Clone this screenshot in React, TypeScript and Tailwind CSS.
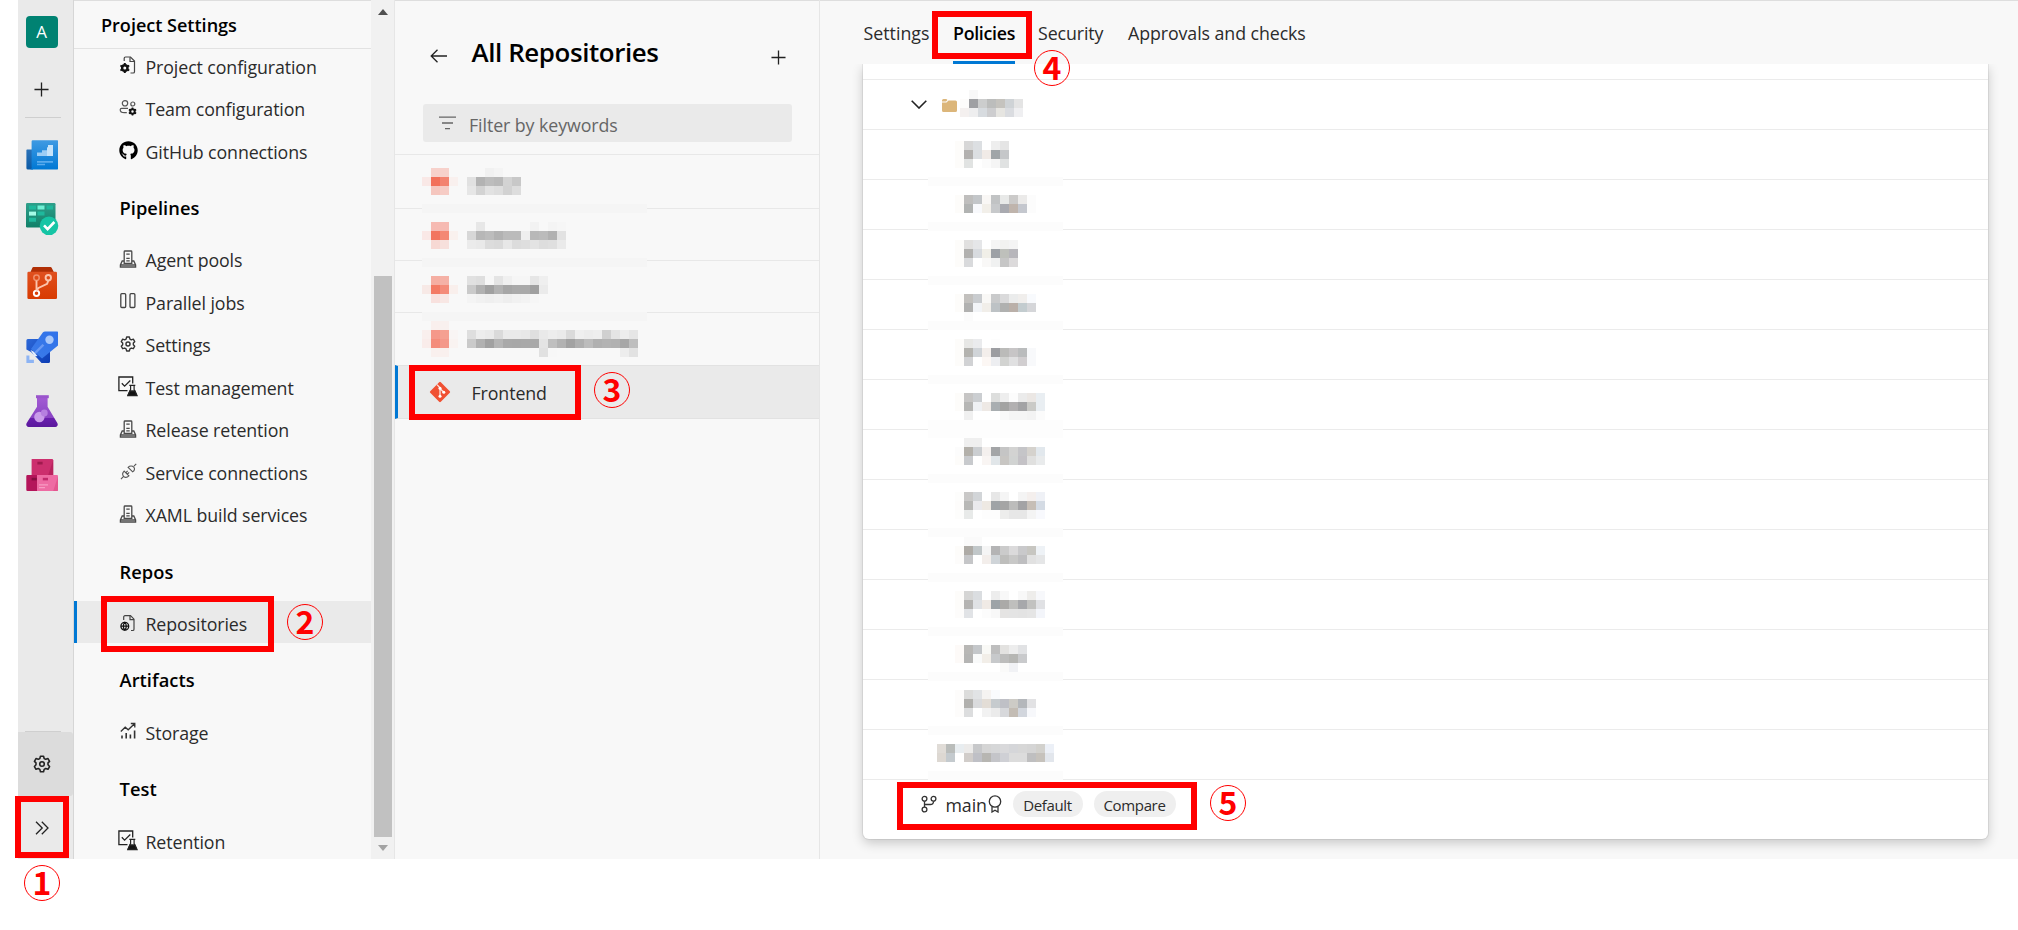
import React from "react";
import { FaGithub } from "react-icons/fa";

type IconProps = { className?: string };

/* ---------- Rail icons ---------- */

const OverviewIcon = () => (
  <svg viewBox="0 0 32 32" className="size-8">
    <defs>
      <linearGradient id="ov" x1="0" y1="0" x2="0" y2="1">
        <stop offset="0" stopColor="#3f9ae3" />
        <stop offset="1" stopColor="#0078d4" />
      </linearGradient>
      <linearGradient id="ovl" x1="0" y1="0" x2="0" y2="1">
        <stop offset="0" stopColor="#2a72b8" />
        <stop offset="1" stopColor="#0b5aa5" />
      </linearGradient>
    </defs>
    <path d="M1 10.5h6v20H2a1.6 1.6 0 0 1-1.6-1.6V11z" fill="url(#ovl)" />
    <path d="M5.6 2.6A1.3 1.3 0 0 1 7 1.200h24a1.2 1.2 0 0 1 1.200 1.200V29a1.500 1.500 0 0 1-1.500 1.500H4.200A2 2 0 0 0 5.600 28z" fill="url(#ov)" />
    <path d="M11 17v-3.400h5v-2.400h5V8.600h1V17z" fill="#9ccdf5" />
    <path d="M21 17V8.600h1V6h5v11z" fill="#c6e3fa" />
    <path d="M11 22h16v1.700H11zM11 24.800h8v1.500h-8z" fill="#5aabed" />
  </svg>
);

const BoardsIcon = () => (
  <svg viewBox="0 0 32 32" className="size-8 overflow-visible">
    <defs>
      <linearGradient id="bd" x1="0" y1="0" x2="0" y2="1">
        <stop offset="0" stopColor="#2f9f8b" />
        <stop offset="1" stopColor="#108068" />
      </linearGradient>
    </defs>
    <rect x="0" y="0" width="29.500" height="24.500" rx="1.200" fill="url(#bd)" />
    <path d="M3 2.500h7v4H3zM20.500 2.500h6.500v4h-6.500zM11.500 8.600h7v4h-7zM3 14.700h7v4H3z" fill="#1fb89c" />
    <path d="M11.500 2.500h7v4h-7z" fill="#6ff0d5" />
    <path d="M3 8.600h7v4H3z" fill="#a4fae6" />
    <circle cx="23" cy="22.800" r="9.300" fill="#16c5a5" />
    <path d="m18 22.400 3.600 3.800 6.800-7.200" fill="none" stroke="#fff" strokeWidth="2.600" />
  </svg>
);

const ReposIcon = () => (
  <svg viewBox="0 0 32 32" className="size-8">
    <defs>
      <linearGradient id="rp" x1="0" y1="0" x2="0" y2="1">
        <stop offset="0" stopColor="#e0501f" />
        <stop offset="1" stopColor="#d83b01" />
      </linearGradient>
    </defs>
    <path d="M7.500 0h17a1.200 1.200 0 0 1 1 .5l2.300 4.500H4.500L6.500.5a1.200 1.200 0 0 1 1-.5z" fill="#b02f05" />
    <rect x="1.400" y="4.800" width="29.600" height="27.200" rx="1.300" fill="url(#rp)" />
    <g fill="none" stroke="#fbc4ac" strokeWidth="1.900">
      <circle cx="10.500" cy="10.700" r="2.700" strokeWidth="1.500" stroke="#f0906c" />
      <circle cx="22.300" cy="10.700" r="2.700" />
      <circle cx="10.500" cy="26.300" r="2.700" stroke="#fff" />
      <path d="M10.500 13.400v10M22.300 13.600l-1.200 3.200-8.600 4.200-1.800 2.500" />
    </g>
  </svg>
);

const PipelinesIcon = () => (
  <svg viewBox="0 0 32 32" className="size-8">
    <defs>
      <linearGradient id="pl" x1="1" y1="0" x2="0" y2="1">
        <stop offset="0" stopColor="#2f72ea" />
        <stop offset="1" stopColor="#3c7be8" />
      </linearGradient>
      <linearGradient id="plb" x1="0" y1="0" x2="1" y2="1">
        <stop offset="0" stopColor="#2c68d8" />
        <stop offset="1" stopColor="#0c3cb4" />
      </linearGradient>
    </defs>
    <path d="M2 8h14l8 6v16.500a1.500 1.500 0 0 1-1.500 1.500h-7L11 27 5 21 .4 18.500v-9A1.500 1.500 0 0 1 2 8z" fill="url(#plb)" />
    <path d="M17 1.200A3 3 0 0 1 19 .4h12a1.300 1.300 0 0 1 1.300 1.300V13a3 3 0 0 1-.9 2L16 27.500 5 18z" fill="url(#pl)" />
    <path d="m8 21.500 8.500-8.500 1.800 1.500-8.500 8.500z" fill="#6a9af4" />
    <circle cx="23.500" cy="8.800" r="4.200" fill="#a9c8fa" />
    <path d="m4.500 19 3 1.500 4 4.500-3 .5z" fill="#e4eefc" />
    <path d="M.4 24.500h3v4.300h4.500V32H.4z" fill="#8db4f4" />
  </svg>
);

const TestIcon = () => (
  <svg viewBox="0 0 32 32" className="size-8">
    <defs>
      <linearGradient id="ts" x1="0" y1="0" x2="0" y2="1">
        <stop offset="0" stopColor="#a45cd4" />
        <stop offset=".69" stopColor="#8a45c4" />
        <stop offset=".7" stopColor="#6a1fae" />
        <stop offset="1" stopColor="#5a189c" />
      </linearGradient>
    </defs>
    <path d="M11 1.500h10.600v10.300L31.300 28a2.600 2.600 0 0 1-2.300 4H3a2.600 2.600 0 0 1-2.300-4L11 11.800z" fill="url(#ts)" />
    <path d="M10 .2h12.800v3H10z" fill="#9a55cc" />
    <circle cx="13.400" cy="22" r="5.200" fill="#c99bea" />
    <circle cx="18.300" cy="18" r="3.400" fill="#b680e0" />
  </svg>
);

const ArtifactsIcon = () => (
  <svg viewBox="0 0 32 32" className="size-8">
    <path d="M5.600 0H26a1.200 1.200 0 0 1 1.200 1.200V16H5.600z" fill="#cc2f6e" />
    <path d="m27.200 1-5 15h5z" fill="#b9235e" />
    <path d="M1.500 16H11v16H1.500A1.200 1.200 0 0 1 .3 30.800V17.200A1.200 1.200 0 0 1 1.500 16z" fill="#b4155a" />
    <path d="M11 16h20a1.200 1.200 0 0 1 1.200 1.200v13.600A1.200 1.200 0 0 1 31 32H11z" fill="#ee6ba3" />
    <path d="m32.200 17-5 15H31a1.200 1.200 0 0 0 1.200-1.200z" fill="#e4568f" />
    <path d="M11.400 2.800h5.200v2.600h-5.200z" fill="#a01a4e" />
    <path d="M5.600 18.800h5.200v2.600H5.600z" fill="#860d40" />
    <path d="M16.800 18.800h5.200v2.600h-5.200z" fill="#c22a6c" />
    <path d="M13 25.200h9v1.300h-9zM13 28h6v1.300h-6z" fill="#f79cc3" />
  </svg>
);

const PlusIcon = ({ className }: IconProps) => (
  <svg viewBox="0 0 16 16" className={className} fill="none" stroke="currentColor" strokeWidth="1.400">
    <path d="M8 .5v15M.5 8h15" />
  </svg>
);

const GEAR =
  "M6.700 1h2.600l.5 1.900 1.300.7 1.900-.6 1.300 2.300-1.300 1.300v1.600l1.300 1.400-1.300 2.300-1.900-.6-1.300.7-.5 2H6.700l-.5-2-1.300-.7-1.900.6-1.300-2.300L3 8.200V6.600L1.700 5.300 3 3l1.900.6 1.300-.7z";

const GearIcon = ({ className }: IconProps) => (
  <svg viewBox="0.5 0 15 15" className={className} fill="none" stroke="currentColor" strokeWidth="1.300" strokeLinejoin="round">
    <path d={GEAR} />
    <circle cx="8" cy="7.500" r="1.900" />
  </svg>
);

/* ---------- Settings list icons ---------- */

const MiniGear = ({ x, y }: { x: number; y: number }) => (
  <g transform={`translate(${x} ${y})`}>
    <circle r="2.700" fill="none" stroke="#111" strokeWidth="2.400" />
    <path d="M0-5v2M0 3v2M-4.400-2.500l1.700 1M2.700 1.500l1.700 1M-4.400 2.500l1.700-1M2.700-1.500l1.700-1" stroke="#111" strokeWidth="2" />
  </g>
);

const ProjectConfigIcon = () => (
  <svg viewBox="0 0 18 18" className="size-[18px]" fill="none" stroke="#444" strokeWidth="1.200">
    <path d="M5.200 5V2.300A1.300 1.300 0 0 1 6.500 1h5l4 4v10.700a1.300 1.300 0 0 1-1.300 1.300h-2.700" />
    <path d="M11 1.200v4.300h4.300" />
    <MiniGear x={5.800} y={12} />
  </svg>
);

const TeamConfigIcon = () => (
  <svg viewBox="0 0 18 18" className="size-[18px]" fill="none" stroke="#555" strokeWidth="1.200">
    <circle cx="6" cy="4.300" r="2.700" />
    <circle cx="13.800" cy="5" r="2" />
    <path d="M9 9.300H2.600A1.400 1.400 0 0 0 1.200 10.700c0 2 1.600 2.900 4.100 2.900h2.500" />
    <g transform="translate(13.500 12.500) scale(.82) translate(-13.500 -12.500)">
      <MiniGear x={13.500} y={12.500} />
    </g>
  </svg>
);

const ServerIcon = () => (
  <svg viewBox="0 0 18 18" className="size-[18px]" fill="none" stroke="#4a4a4a" strokeWidth="1.300">
    <path d="M5.200 13.300V1.800A.8.8 0 0 1 6 1h6a.8.800 0 0 1 .8.800v11.500z" />
    <path d="M7.300 4.200h3.400M7.300 8.300h3.400M7.300 10.800h3.400" />
    <path d="M5 11H3.200l-1.800 4v2h15.200v-2l-1.800-4H13M1.500 15h15" />
  </svg>
);

const ParallelIcon = () => (
  <svg viewBox="0 0 18 18" className="size-[18px]" fill="none" stroke="#444" strokeWidth="1.300">
    <rect x="1.800" y="1.700" width="4.900" height="13.800" rx="1" />
    <rect x="11" y="1.700" width="4.900" height="13.800" rx="1" />
  </svg>
);

const TestMgmtIcon = () => (
  <svg viewBox="0 0 20 20" className="size-5 overflow-visible" fill="none" stroke="#222" strokeWidth="1.300">
    <path d="M9.500 14.700H.9V1h13.800v6.500" />
    <path d="m3.800 7.300 2.800 2.800L12.300 4.500" />
    <path d="M11.300 9.400h6M12.600 9.500v4l-2.600 5.700h8.700l-2.600-5.700v-4" strokeWidth="1.200" />
    <path d="m11.900 15-2 4.500h9l-2-4.500z" fill="#111" />
  </svg>
);

const PlugIcon = () => (
  <svg viewBox="0 0 18 18" className="size-[17px]" fill="none" stroke="#555" strokeWidth="1.200">
    <path d="m8.600 4.600 4.800 4.800c2-1.200 2.600-3.500 1.200-5s-4.200-1.700-6 .2zM14.800 3.400 17.200 1" />
    <path d="m4.400 8.600 5 5c-1.800 1.800-4.100 1.900-5.600.5s-1.400-3.700.6-5.500zM3.500 14.400 1 17M6.200 10.300l1.900-1.900M7.800 11.900l1.900-1.900" />
  </svg>
);

const RepoIcon = () => (
  <svg viewBox="0 0 18 18" className="size-[18px]" fill="none" stroke="#444" strokeWidth="1.200">
    <path d="M4.700 6V3A1.300 1.300 0 0 1 6 1.700h5.500L15 5.200v10a1.300 1.300 0 0 1-1.300 1.300h-1.700" />
    <path d="M11 2v3.700h4" />
    <circle cx="5.800" cy="12.200" r="3.900" stroke="#111" strokeWidth="1.300" />
    <path d="M2 12.200h7.600M5.800 8.400c-2 2-2 5.600 0 7.600 2-2 2-5.600 0-7.600z" stroke="#111" strokeWidth="1.200" />
  </svg>
);

const StorageIcon = () => (
  <svg viewBox="0 0 18 18" className="size-[18px]" fill="none" stroke="#333" strokeWidth="1.300">
    <path d="m1.800 9.500 4.400-4.300 3 2.600 6.300-6M11.800 1.500h4v4" />
    <path d="M3 16.500v-3M7.200 16.500V11M11.400 16.500V12.500M15.600 16.500V8.500" strokeWidth="1.600" />
  </svg>
);

/* ---------- Pixelated labels ---------- */

type Run = [row: number, col: number, colors: string];

const toColor = (c: string) => (c.length === 2 ? `#${c}${c}${c}` : `#${c}`);

const Pixels = ({ runs, cols, rows, className }: { runs: Run[]; cols: number; rows: number; className: string }) => (
  <svg width={cols * 9} height={rows * 9} shapeRendering="crispEdges" className={className} aria-hidden="true">
    {runs.flatMap(([r, c, colors]) =>
      colors
        .split(" ")
        .map((v, i) =>
          v === "." ? null : v.startsWith("*") ? (
            <rect key={`${r}-${c}-${i}`} x={c * 9} y={r * 9} width={cols * 9} height={9} fill={toColor(v.slice(1))} />
          ) : (
            <rect key={`${r}-${c}-${i}`} x={(c + i) * 9} y={r * 9} width={9} height={9} fill={toColor(v)} />
          )
        )
    )}
  </svg>
);

const REPO_RUNS: Run[] = [
  [0, 1, "f7d1cb f7d1cb . . . . f1 f4"],
  [1, 0, "f9e8e6 f2705a f38370 f9f0ee . e1 b3 bd b9 d3 c8"],
  [2, 1, "f5c6be f6ccc5 . . e6 d3 e2 de d2 dd"],
  [4, 0, "*f5"],
  [6, 1, "f6bab2 f6bab2 . . . e7 . . . . . f2 . f4 f6"],
  [7, 0, "f9e8e6 f2755f f48874 f9f1ee . d7 b7 bc b2 bb bb ef b8 bb b1 e2"],
  [8, 1, "f7d9d4 f7e0dc . . eb e9 dc da e7 dc de e3 dd df ea"],
  [10, 0, "*f5"],
  [12, 1, "f5aea2 f5b1a6 . . e1 de f7 e4 f0 f6 f6 e6 ef"],
  [13, 0, "f7e9e6 f37a64 f48b79 f9efec . ca b1 a0 b2 a6 aa aa a0 eb"],
  [14, 1, "f8e1de f8e7e4 . . f4 f1 ef f1 ee f1 f3 f6"],
  [16, 0, "*f5"],
  [17, 1, "f9efed f8f0ee"],
  [18, 0, "f9efed f5988a f5a091 f9f5f4 . de ed ea da ea ea e8 df e9 ed ea da ef ec ee d0 e4 ed e6"],
  [19, 0, "f9ecea f48c7b f4988a f9f3f1 . ca b1 a1 b5 a9 a8 a9 a9 e4 bf b2 a2 af bc b0 b3 b1 a7 be"],
  [20, 1, "f9f0ee f9f0ee"],
  [20, 13, "e1 f7"],
  [20, 22, "ed e2"],
];

const BRANCH_RUNS: Run[] = [
  [3, 3, "fdfcfa d7 dcdfe2 . ee e5"],
  [4, 3, "fdfcfa b3b1af dcdfe2 f1ebe7 a0a5a8 c5c7c9"],
  [5, 3, "fdfcfa e1e3e2 . fb f5 e0e2e2"],
  [7, 0, "*fc"],
  [9, 3, "fdfcfa bfbebd c3c6c9 f9f7f5 c1c3c4 e8e9e8 cbcac9 ebeae9 fc"],
  [10, 3, "fdfcfa b1b3b2 f8f9fc f2efe9 c7c9cb a9aab0 bfb4ac c4c7ce fc"],
  [12, 0, "*fc"],
  [14, 3, "fdfcfa e1e0df e5e6e8 . f5 f2f2f0 f4"],
  [15, 3, "fdfcfa b2b1af d8dbdf f1efe8 9da1a6 bec0bb b7b6bb"],
  [16, 3, "fdfcfa d9dadc . f9f8f7 f0f1f1 c6 dcdadb"],
  [18, 0, "*fc"],
  [20, 3, "fdfcfa c2c0bd c9cccf f9f8f6 c9cacb dadadb ebecec f0eeec f8fafd"],
  [21, 3, "fdfcfa b1b1b0 f2f4f7 f1eee9 bdc2c5 b0b1b0 bab0a9 c3cccf d5d6d9"],
  [22, 4, "fb"],
  [23, 0, "*fc"],
  [25, 3, "fdfcfa e7e7e5 eaebed . fd"],
  [26, 3, "fdfcfa b4b3af d0d4d8 f3eeeb 9c9da1 bbbbb9 c7c5c6 babcbd f8f9fb"],
  [27, 3, "fdfcfa d1d2d4 . fcf7f4 edeef1 d2d3d1 e0e0e1 d1ced0 f8f9fb"],
  [29, 0, "*fc"],
  [31, 3, "fdfcfa c6c5c4 cbced1 . dddedd ee fc eb ebe7e4 e9eef2"],
  [32, 3, "fdfcfa b6b6b4 eff1f4 eee9e5 a9aeb1 a3a3a2 b2b0b1 a3a3a5 cacac7 e9eef2"],
  [33, 4, "f0 . . . f9 f5 f5 f3 fb"],
  [34, 0, "*fd"],
  [35, 0, "*fd"],
  [36, 4, "ef ef"],
  [37, 3, "fcfcfc b3b0aa cbced1 f4f0ee a3a5a7 c5c5c5 d3d3d2 c5c5c8 d5d2cd e2e8ed"],
  [38, 3, "fdfcfa c8cacd . f9f5f3 e1e6e9 c8c6c3 d1d3d2 c4c2c6 e0e0df e9ebec"],
  [40, 0, "*fc"],
  [42, 3, "fdfdfc c9c8c7 d2d5d8 . e7 f5 . f4 f4efed eff1f6"],
  [43, 3, "fdfcfb b8b8b6 eaeaed eee9e3 9fa3a6 a5a5a5 bcbcbb a3a3a5 c6beb6 d4dbe4"],
  [44, 3, "fdfdfc e8eae9 . fd fd ededec e7 e7 f4 f8f9fd"],
  [46, 0, "*fc"],
  [47, 4, "fa fa"],
  [48, 3, "fdfcfa aeaba6 c1c7c9 f5f5f5 b4b4b5 cb dbdadb c9c9cb c7c6c1 eef2f6"],
  [49, 3, "fdfcfb c5c6c8 . f3eeeb cfd4d8 bebebc c8c8c7 bebec0 e1 e5e6e7"],
  [51, 0, "*fc"],
  [53, 3, "fdfcfa d5d5d4 dadde0 . ed f8 . f8 eeedeb f7f8fb"],
  [54, 3, "fdfcfa b5b4b2 e0e2e5 f0eae5 9da3a7 abaaa8 bfbfbd a7a8ab c2c2c0 e0e1e4"],
  [55, 3, "fdfcfb e1e3e6 . fc f8 e5e4e3 e4 e3 e5 f3f5fa"],
  [57, 0, "*fc"],
  [59, 3, "fdfaf8 b8b7b5 c4c7ca f9f9f6 bebebe e3e2e0 ed e1e2e4"],
  [60, 3, "fdfaf8 b5b5b4 f9fafa f2eee8 c7c9cb bdbdbc b6b6b3 c9cacc"],
  [61, 8, "fafaf9 f1f2f5"],
  [62, 0, "*fc"],
  [64, 3, "fdfcfb dcdcdb e1e3e5 f5f3f1 f9fbfd"],
  [65, 3, "fdfcfb b1b0ad dadbdd e3ddd6 c6cbce bfc0c6 cdcbc6 b4b7bb e2e2e4"],
  [66, 3, "fdfcfb dcddde . f2 ebebeb d7d8db c3bcb4 d2d6dd f7f8fb"],
  [68, 0, "*fc"],
  [70, 1, "e0dcd7 b9bcba e8edf0 ecebea c7c8ca d5 d6d7d8 d9d9db d5d6d9 d7 d5 d2d1cd ecf0f7"],
  [71, 1, "ddd8d2 c4cace . d1cdca bfc0c6 b7b6b2 c4c5c9 cfd0d5 dc dc bfbfc0 c6c2bc e2e6ec"],
  [73, 0, "*fc"],
];

const FOLDER_RUNS: Run[] = [
  [0, 1, "f8"],
  [1, 0, "fdfcfb 9fa0a3 cccdcd bcbdbc c5c3be cfd3d6 e4"],
  [2, 0, "f4f0ef eeeeef d7dbdf cdcdcf e6e5e1 dadce0 efeff1"],
];

/* ---------- Annotations ---------- */

const Frame = ({ className }: { className: string }) => (
  <div className={`pointer-events-none absolute border-[6px] border-[#ff0000] ${className}`} />
);

const Step = ({ n, className }: { n: number; className: string }) => (
  <div
    className={`absolute flex size-9 items-center justify-center rounded-full border border-[#ff0000] font-['Noto_Sans_CJK_JP','Noto_Sans',sans-serif] text-[32px] leading-none font-bold tracking-normal text-[#ff0000] ${className}`}
  >
    <span className="relative -top-[2px]">{n}</span>
  </div>
);

/* ---------- Panels ---------- */

const Rail = () => (
  <aside className="flex w-14 shrink-0 flex-col items-center border-r border-[#d6d6d6] bg-[#eaeaea] pt-4">
    <div className="mr-2 flex size-8 items-center justify-center rounded-[4px] bg-[#008272] text-[17px] text-white">A</div>
    <PlusIcon className="mt-[34px] mr-2 size-[15px] text-[#222]" />
    <div className="mt-[20px] mr-[6px] h-px w-9 bg-[#cfcfcf]" />
    <div className="mt-[21px] mr-2 flex flex-col gap-8">
      <OverviewIcon />
      <BoardsIcon />
      <ReposIcon />
      <PipelinesIcon />
      <TestIcon />
      <ArtifactsIcon />
    </div>
    <div className="mt-auto mr-[6px] h-px w-9 shrink-0 bg-[#cfcfcf]" />
    <div className="flex h-16 w-full shrink-0 items-center justify-center rounded-r-[3px] bg-[#dcdcdc] pr-[7px]">
      <GearIcon className="size-[18px] text-[#222]" />
    </div>
    <div className="flex h-[63px] w-full shrink-0 items-center justify-center pr-[7px]">
      <svg viewBox="0 0 14 14" className="size-[14px]" fill="none" stroke="#222" strokeWidth="1.300">
        <path d="m1 .8 6.200 6.200L1 13.200M6.800.8 13 7l-6.200 6.200" />
      </svg>
    </div>
  </aside>
);

const NavItem = ({ icon, label, active }: { icon: React.ReactNode; label: string; active?: boolean }) => (
  <div
    className={`flex h-[42.5px] shrink-0 items-center border-l-[3px] pl-[41px] ${active ? "border-[#0078d4] bg-[#eaeaea]" : "border-transparent"}`}
  >
    <span className="flex w-[27.500px] shrink-0 justify-start">
      <span className="flex w-5 justify-center pt-px">{icon}</span>
    </span>
    <span className="pt-1 whitespace-nowrap text-[#2b2b2b]">{label}</span>
  </div>
);

const NavHeading = ({ children }: { children: string }) => (
  <div className="h-[66.2px] shrink-0 pt-[25px] pl-[45.500px] text-[18.300px] font-semibold tracking-[0.050px] text-black">
    {children}
  </div>
);

const SettingsNav = () => (
  <nav className="flex w-[297px] shrink-0 flex-col overflow-hidden">
    <div className="h-[49px] shrink-0 border-b border-[#e2e2e2] pt-[13px] pl-[27px] font-semibold text-black">
      <span className="text-[18.100px] tracking-[-0.030px]">Project Settings</span>
    </div>
    <div className="-mt-[5.500px] flex flex-col">
      <NavItem icon={<ProjectConfigIcon />} label="Project configuration" />
      <NavItem icon={<TeamConfigIcon />} label="Team configuration" />
      <NavItem icon={<FaGithub className="size-[19px] text-black" />} label="GitHub connections" />
      <NavHeading>Pipelines</NavHeading>
      <NavItem icon={<ServerIcon />} label="Agent pools" />
      <NavItem icon={<ParallelIcon />} label="Parallel jobs" />
      <NavItem icon={<GearIcon className="size-4 text-[#333]" />} label="Settings" />
      <NavItem icon={<TestMgmtIcon />} label="Test management" />
      <NavItem icon={<ServerIcon />} label="Release retention" />
      <NavItem icon={<PlugIcon />} label="Service connections" />
      <NavItem icon={<ServerIcon />} label="XAML build services" />
      <NavHeading>Repos</NavHeading>
      <NavItem icon={<RepoIcon />} label="Repositories" active />
      <NavHeading>Artifacts</NavHeading>
      <NavItem icon={<StorageIcon />} label="Storage" />
      <NavHeading>Test</NavHeading>
      <NavItem icon={<TestMgmtIcon />} label="Retention" />
    </div>
  </nav>
);

const Scrollbar = () => (
  <div className="flex w-[23px] shrink-0 flex-col items-center bg-[#f1f1f1]">
    <svg viewBox="0 0 10 6" className="mt-[9px] h-[6px] w-[10px]">
      <path d="M0 6 5 0l5 6z" fill="#505050" />
    </svg>
    <div className="mt-[261px] h-[561px] w-[18px] bg-[#c1c1c1]" />
    <svg viewBox="0 0 10 6" className="mt-[8px] h-[6px] w-[10px]">
      <path d="m0 0 5 6 5-6z" fill="#a3a3a3" />
    </svg>
  </div>
);

const RepoList = () => (
  <section className="relative flex w-[426px] shrink-0 flex-col border-x border-[#e6e6e6]">
    <div className="flex h-[104px] shrink-0 items-start pr-[33.500px] pl-[35px]">
      <svg viewBox="0 0 17 14" className="mt-[48.500px] h-[14px] w-[17px]" fill="none" stroke="#222" strokeWidth="1.300">
        <path d="M7.500.7 1.200 7l6.300 6.300M1.200 7H17" />
      </svg>
      <h1 className="mt-[34px] ml-[24.500px] text-[25.900px] leading-9 font-semibold tracking-[-0.400px] text-black">
        All Repositories
      </h1>
      <PlusIcon className="mt-[49.500px] ml-auto size-[15px] text-[#222]" />
    </div>
    <div className="mr-[27px] ml-[28px] flex h-[38px] shrink-0 items-center rounded-[3px] bg-[#eaeaea] pl-4 text-[#666]">
      <svg viewBox="0 0 17 14" className="-mt-px h-[14px] w-[17px]" fill="none" stroke="#666" strokeWidth="1.300">
        <path d="M0 1.200h17M3 7h11M6 12.700h5" />
      </svg>
      <span className="ml-[13px] pt-[3px] tracking-[-0.080px]">Filter by keywords</span>
    </div>
    <div className="mt-3 flex flex-col">
      <div className="h-[53.500px] border-t border-[#e8e8e8]" />
      <div className="h-[52.300px] border-t border-[#e8e8e8]" />
      <div className="h-[52.700px] border-t border-[#e8e8e8]" />
      <div className="h-[52.500px] border-t border-[#e8e8e8]" />
      <div className="flex h-[54px] items-center border-y border-l-[3px] border-[#e2e2e2] border-l-[#0078d4] bg-[#eaeaea] pl-[30.500px]">
        <svg viewBox="0 0 22 22" className="size-[22px]">
          <rect x="3.500" y="3.500" width="15" height="15" rx="1.200" fill="#f05133" transform="rotate(45 11 11)" />
          <path d="m8 3.600 3 3.200v8.400M11 7.500l4 4" stroke="#fbe3de" strokeWidth="1.300" fill="none" />
          <circle cx="11" cy="7.300" r="1.500" fill="#fff" />
          <circle cx="11" cy="15.200" r="1.500" fill="#fff" />
          <circle cx="14.800" cy="11.300" r="1.500" fill="#fff" />
        </svg>
        <span className="ml-[21px] pt-[3px] text-[#2b2b2b]">Frontend</span>
      </div>
    </div>
    <Pixels runs={REPO_RUNS} cols={25} rows={21} className="absolute top-[168px] left-[27px]" />
  </section>
);

const Branch = () => (
  <svg viewBox="0 0 16 18" className="h-[18px] w-4" fill="none" stroke="#333" strokeWidth="1.300">
    <circle cx="3.500" cy="3.800" r="2.400" />
    <circle cx="12.500" cy="3.800" r="2.400" />
    <circle cx="3.500" cy="14.500" r="2.400" />
    <path d="M3.500 6.200v5.900M12.500 6.200c0 2.300-1.200 3.300-3.200 3.300H3.500" />
  </svg>
);

const Ribbon = () => (
  <svg viewBox="0 0 14 18" className="h-[18px] w-[14px]" fill="none" stroke="#333" strokeWidth="1.300">
    <circle cx="7" cy="6.500" r="5.700" />
    <path d="M4 11.500V17l3-1.800L10 17v-5.500" />
  </svg>
);

const Policies = () => (
  <main className="relative flex min-w-0 flex-1 flex-col overflow-hidden">
    <div className="flex h-16 shrink-0 items-start pl-[43.500px] text-[#2b2b2b]">
      <span className="w-[89.500px] pt-[21px] tracking-normal">Settings</span>
      <span className="h-16 w-[62px] border-b-[3px] border-[#0078d4] pt-[21px] font-semibold tracking-[-0.300px] text-black">
        Policies
      </span>
      <span className="ml-[23px] w-[90px] pt-[21px]">Security</span>
      <span className="pt-[21px] tracking-[-0.080px] whitespace-nowrap">Approvals and checks</span>
    </div>
    <div className="min-h-0 flex-1 overflow-hidden">
      <div className="mr-[30px] ml-[43px] h-[775px] rounded-b-[6px] bg-white shadow-[0_0_0_1px_rgba(0,0,0,0.06),0_4px_12px_rgba(0,0,0,0.2)]">
        <div className="h-[15px]" />
        <div className="flex h-[49.970px] items-center border-t border-[#ebebeb] pl-[48px]">
          <svg viewBox="0 0 16 9" className="h-[9px] w-4" fill="none" stroke="#222" strokeWidth="1.600">
            <path d="m.7.7 7.300 7.300L15.300.7" />
          </svg>
          <svg viewBox="0 0 15 13" className="mt-[2px] ml-[15px] h-[13px] w-[15px]">
            <path d="M0 3.500h4.500L6.500 1.500H13.500A1.500 1.500 0 0 1 15 3v8.500A1.500 1.500 0 0 1 13.500 13h-12A1.500 1.500 0 0 1 0 11.500z" fill="#dcb67a" />
            <path d="M0 2.500v-1A1.500 1.500 0 0 1 1.500 0h2.800l1.200 1-1.400 1.500z" fill="#dcb67a" />
          </svg>
          <Pixels runs={FOLDER_RUNS} cols={7} rows={3} className="-mt-px ml-[3px]" />
        </div>
        {Array.from({ length: 13 }, (_, i) => (
          <div key={i} className="h-[49.970px] border-t border-[#ebebeb]" />
        ))}
        <div className="flex items-center border-t border-[#ebebeb] pt-[11px] pl-[58px] text-[#2b2b2b]">
          <Branch />
          <span className="ml-[8.500px] w-[42px] pt-[2px]">main</span>
          <Ribbon />
          <span className="ml-[11px] flex h-[26px] w-[70px] items-center justify-center rounded-full bg-[#efefef] pt-[3px] text-[15px] tracking-[-0.350px]">
            Default
          </span>
          <span className="ml-[11px] flex h-[26px] w-[82px] items-center justify-center rounded-full bg-[#efefef] pt-[3px] text-[15px] tracking-[-0.350px]">
            Compare
          </span>
        </div>
      </div>
    </div>
    <Pixels runs={BRANCH_RUNS} cols={15} rows={75} className="absolute top-[114px] left-[108px]" />
  </main>
);

export default function App() {
  return (
    <div className="relative h-[930px] w-[2018px] overflow-hidden bg-white font-['Open_Sans','Noto_Sans',sans-serif] text-[17.800px] leading-6 tracking-[-0.100px]">
      <div className="ml-[18px] flex h-[859px] border-t border-[#dedede] bg-[#f8f8f8]">
        <div className="-mt-px flex min-w-0 flex-1">
          <Rail />
          <SettingsNav />
          <Scrollbar />
          <RepoList />
          <Policies />
        </div>
      </div>
      <Frame className="top-[796px] left-[15px] h-[62px] w-[54px]" />
      <Step n={1} className="top-[865px] left-[24px]" />
      <Frame className="top-[596px] left-[101px] h-[56px] w-[173px]" />
      <Step n={2} className="top-[604px] left-[287px]" />
      <Frame className="top-[365px] left-[409px] h-[55px] w-[172px]" />
      <Step n={3} className="top-[372px] left-[594px]" />
      <Frame className="top-[11px] left-[932px] h-[48px] w-[100px]" />
      <Step n={4} className="top-[50px] left-[1034px]" />
      <Frame className="top-[782px] left-[897px] h-[48px] w-[300px]" />
      <Step n={5} className="top-[785px] left-[1210px]" />
    </div>
  );
}
